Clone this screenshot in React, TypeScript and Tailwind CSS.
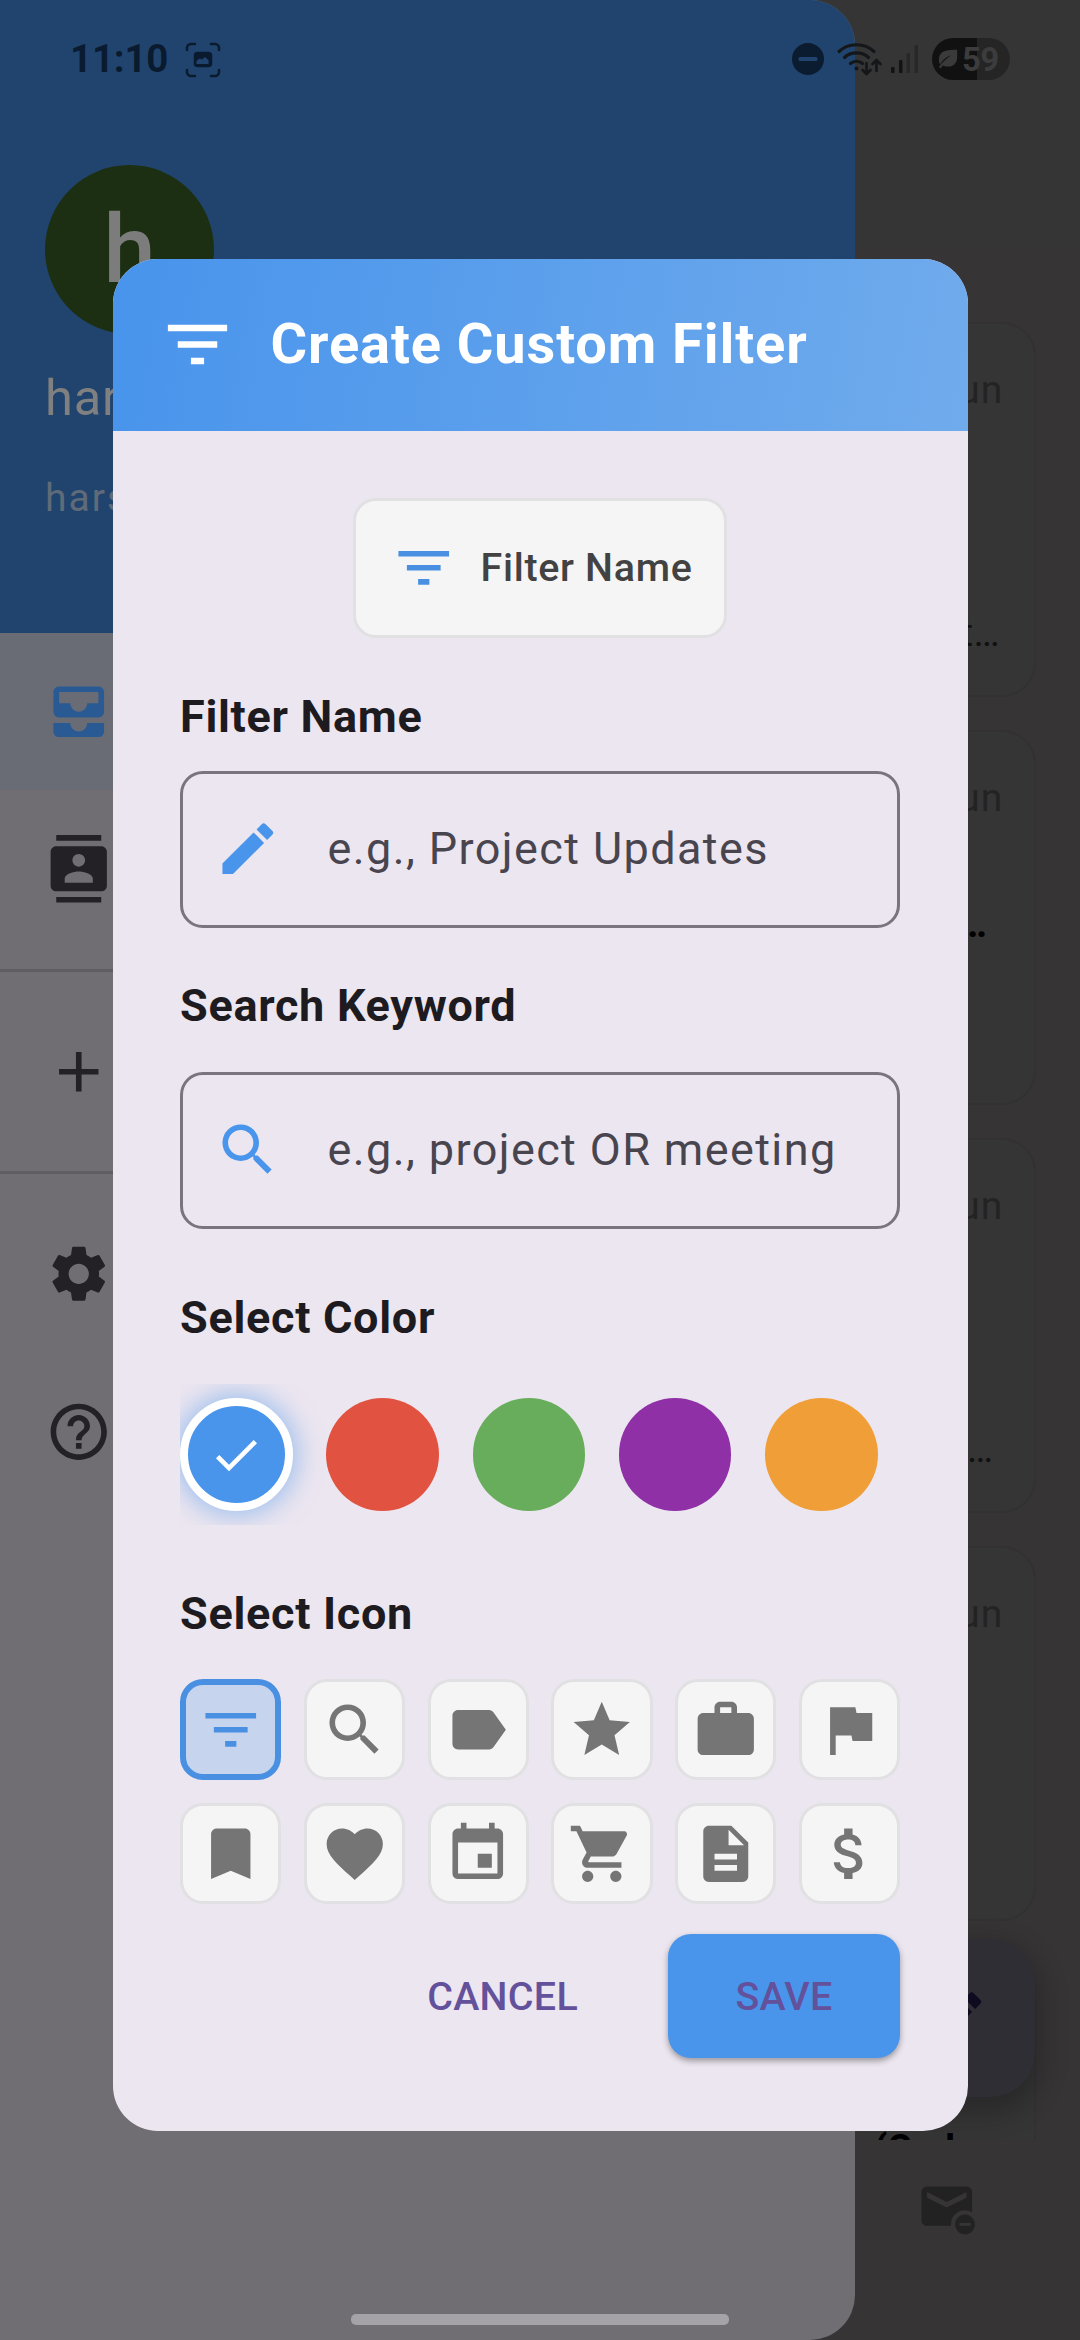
import React from "react";
import {
  MdAdd,
  MdAllInbox,
  MdAttachMoney,
  MdBookmark,
  MdCheck,
  MdContacts,
  MdDescription,
  MdEdit,
  MdEvent,
  MdFavorite,
  MdFilterList,
  MdFlag,
  MdHelpOutline,
  MdLabel,
  MdSearch,
  MdSettings,
  MdShoppingCart,
  MdStar,
  MdUnsubscribe,
  MdWork,
} from "react-icons/md";

const tiles = [
  MdFilterList,
  MdSearch,
  MdLabel,
  MdStar,
  MdWork,
  MdFlag,
  MdBookmark,
  MdFavorite,
  MdEvent,
  MdShoppingCart,
  MdDescription,
  MdAttachMoney,
];

const swatches = ["bg-[#e15241]", "bg-[#68ad5c]", "bg-[#8f30a6]", "bg-[#f09e38]"];

function StatusBar() {
  return (
    <div className="col-start-1 row-start-1 flex h-[118px] w-full items-center self-start pl-[70px] pr-[70px]">
      <span className="w-[99px] whitespace-nowrap text-[38.500px] font-bold leading-none tracking-[-0.2px] text-[#0a1b30]">11:10</span>
      <svg className="ml-[16px] mt-px h-[36px] w-[36px]" viewBox="0 0 36 36" fill="none" stroke="#0a1b30" strokeWidth="2.6" strokeLinecap="round">
        <path d="M2 8V6a4 4 0 0 1 4-4h4M26 2h4a4 4 0 0 1 4 4v2M34 28v2a4 4 0 0 1-4 4h-4M10 34H6a4 4 0 0 1-4-4v-2" />
        <rect x="9.500" y="10.500" width="17" height="14" rx="3" fill="#0a1b30" strokeWidth="1.500" />
        <path d="M11.500 19l3.200-2.500 2.400 1 2.800-2.500 3.600 3V22h-12z" fill="#21446e" stroke="none" />
      </svg>
      <div className="ml-auto flex items-center">
        <svg className="h-[32px] w-[32px]" viewBox="0 0 32 32">
          <circle cx="16" cy="16" r="16" fill="#0b1c30" />
          <rect x="6.500" y="14" width="19" height="4" rx="1.500" fill="#21446e" />
        </svg>
        <svg className="ml-[12px] h-[36px] w-[48px]" viewBox="0 0 48 36" fill="none" stroke="#141619" strokeWidth="3.200" strokeLinecap="round">
          <path d="M3 10.500C12.500 1.500 28.500 1.500 38 10.500M8.500 16.500c6.500-6.200 17.500-6.200 24 0M14.500 22.500c3.500-3 8.500-3 12 0" />
          <circle cx="20.500" cy="27.500" r="2" fill="#141619" stroke="none" />
          <path d="M30.500 22v10.500M26.500 29l4 4 4-4M40.500 30V19.500M36.500 23l4-4 4 4" strokeWidth="2.600" />
        </svg>
        <svg className="ml-[7px] h-[28px] w-[27px]" viewBox="0 0 27 28">
          <rect x="0" y="22" width="3.500" height="6" rx="1" fill="#131313" />
          <rect x="8" y="15" width="3.500" height="13" rx="1" fill="#131313" />
          <rect x="15.500" y="8" width="3.500" height="20" rx="1" fill="#282828" />
          <rect x="23.500" y="0" width="3.500" height="28" rx="1" fill="#282828" />
        </svg>
        <div className="ml-[14px] flex h-[42px] w-[78px] items-center rounded-full bg-[linear-gradient(90deg,#111_0_45px,#252525_45px)] pl-[5px]">
          <svg className="h-[22px] w-[22px]" viewBox="0 0 24 24">
            <path d="M22 2C11 2 2 3 2 13c0 2 .6 3.600 1.500 5C7 12 11 9.500 15.500 8 11 11 6 15 2 21l2 1 2.500-3c8 3.500 15.500-.5 15.500-9z" fill="#3a3a3a" />
          </svg>
          <span className="ml-[3px] text-[33px] font-bold leading-none tracking-[-0.8px] text-[#3c3c3c]">59</span>
        </div>
      </div>
    </div>
  );
}

function MailCard({ tail }: { tail?: React.ReactNode }) {
  return (
    <div className="h-[375px] shrink-0 overflow-hidden rounded-[34px] border-2 border-[#323133] bg-[#353535]">
      <div className="flex flex-col items-end pr-[31px] pt-[43px]">
        <span className="text-[39px] leading-[46px] tracking-[0.8px] text-[#232323]">Jun</span>
        {tail}
      </div>
    </div>
  );
}

function MailScreen() {
  return (
    <div className="col-start-1 row-start-1 flex h-[2340px] flex-col bg-[#373436] text-[#111]">
      <div className="h-[248px] shrink-0 bg-[#353535]" />
      <div className="flex h-[1892px] shrink-0 flex-col gap-[33px] overflow-hidden pl-[45px] pr-[44px] pt-[74px]">
        <MailCard tail={<span className="mr-[3px] mt-[197px] text-[39px] leading-[46px] tracking-[0.4px]">t…</span>} />
        <MailCard tail={<span className="mr-[16px] mt-[80px] text-[39px] font-bold leading-[46px] text-black">…</span>} />
        <MailCard tail={<span className="mr-[10px] mt-[197px] text-[39px] leading-[46px]">…</span>} />
        <MailCard />
        <div className="h-[375px] shrink-0 rounded-[34px] border-2 border-[#323133] bg-[#353535] pl-[827px] pt-[170px] text-[38px] font-bold leading-[46px] text-black">
          (Cod
        </div>
      </div>
      <div className="flex h-[200px] shrink-0 justify-end pr-[100px] pt-[38px]">
        <MdUnsubscribe className="size-[67.500px] text-[#222]" />
      </div>
    </div>
  );
}

function ComposeButton() {
  return (
    <div className="col-start-1 row-start-1 mb-[243px] mr-[45px] flex h-[158px] w-[158px] items-center justify-center self-end justify-self-end rounded-[45px] bg-[#2f2e35] text-[#0e0a20] shadow-[0_10px_24px_6px_rgba(20,20,20,0.35)]">
      <MdEdit className="size-[67.500px]" />
    </div>
  );
}

function Drawer() {
  return (
    <div className="col-start-1 row-start-1 flex h-[2340px] w-[855px] flex-col overflow-hidden rounded-r-[45px] bg-[#716e73] text-[#232126]">
      <div className="flex h-[633px] shrink-0 flex-col bg-[#21446e] pl-[45px] pt-[165px]">
        <div className="flex size-[169px] items-center justify-center rounded-full bg-[#1d2f13] text-[94px] font-medium leading-none text-[#7c7c7c]">h</div>
        <span className="mt-[34px] text-[50.600px] leading-[60px] tracking-[0.800px] text-[#808080]">harsh</span>
        <span className="mt-[47px] text-[39px] leading-[46px] tracking-[2px] text-[#5f6b78]">harsh@gmail.com</span>
      </div>
      <div className="flex h-[157px] shrink-0 items-center bg-[#696c74] pl-[45px] text-[#2a5a94]">
        <MdAllInbox className="size-[67.500px]" />
      </div>
      <div className="flex h-[182px] shrink-0 border-b-[3px] border-[#5f5c62] pl-[45px] pt-[45px]">
        <MdContacts className="size-[67.500px]" />
      </div>
      <div className="flex h-[202px] shrink-0 items-center border-b-[3px] border-[#5f5c62] pl-[45px]">
        <MdAdd className="size-[67.500px]" />
      </div>
      <div className="flex flex-col gap-[90px] pl-[45px] pt-[66px]">
        <MdSettings className="size-[67.500px]" />
        <MdHelpOutline className="size-[67.500px]" />
      </div>
    </div>
  );
}

function Field({ icon, hint }: { icon: React.ReactNode; hint: string }) {
  return (
    <div className="flex h-[157px] items-center rounded-[23px] border-[3px] border-[#79747e] pb-[2px] pl-[31px] text-[#4a95ec]">
      {icon}
      <span className="ml-[46px] whitespace-nowrap text-[45px] leading-[60px] tracking-[1.400px] text-[#49454f]">{hint}</span>
    </div>
  );
}

function Label({ className, children }: { className: string; children: string }) {
  return <h3 className={`text-[45px] font-bold leading-[60px] tracking-[0.7px] ${className}`}>{children}</h3>;
}

function FilterDialog() {
  return (
    <div className="z-10 col-start-1 row-start-1 mt-[259px] flex h-[1872px] w-[855px] flex-col self-start justify-self-center overflow-hidden rounded-[45px] bg-[#ece6f0] text-[#1d1b20]">
      <div className="flex h-[172px] shrink-0 items-center bg-[linear-gradient(100deg,#4894ec,#70abec)] pb-[2px] pl-[45px] text-white">
        <MdFilterList className="size-[79px]" />
        <h2 className="ml-[34px] text-[56px] font-bold leading-[66px] tracking-[0.9px]">Create Custom Filter</h2>
      </div>
      <div className="flex flex-col px-[67.500px] pt-[67px]">
        <div className="flex h-[140px] w-[374px] items-center self-center rounded-[23px] border-[3px] border-[#e1e0e2] bg-[#f5f5f5] pl-[34px]">
          <MdFilterList className="size-[67.500px] text-[#4a90e2]" />
          <span className="ml-[23px] whitespace-nowrap text-[39.400px] font-medium leading-[46px] tracking-[0.7px] text-[#424242]">Filter Name</span>
        </div>
        <Label className="mt-[49px]">Filter Name</Label>
        <div className="mt-[24px]">
          <Field icon={<MdEdit className="size-[67.500px]" />} hint="e.g., Project Updates" />
        </div>
        <Label className="mt-[48px]">Search Keyword</Label>
        <div className="mt-[36px]">
          <Field icon={<MdSearch className="size-[67.500px]" />} hint="e.g., project OR meeting" />
        </div>
        <Label className="mt-[59px]">Select Color</Label>
        <div className="mt-[36px] flex h-[141px] items-center gap-[33.750px] overflow-hidden">
          <div className="flex size-[112.500px] items-center justify-center rounded-full border-[8.400px] border-white bg-[#4a95ec] text-white shadow-[0_0_26px_4px_rgba(74,149,236,0.5)]">
            <MdCheck className="size-[56px]" />
          </div>
          {swatches.map((color) => (
            <div key={color} className={`size-[112.500px] rounded-full ${color}`} />
          ))}
        </div>
        <Label className="mt-[59px]">Select Icon</Label>
        <div className="mt-[35px] grid grid-cols-6 gap-[22.500px]">
          {tiles.map((Icon, i) => (
            <div
              key={i}
              className={
                i === 0
                  ? "flex h-[101.250px] items-center justify-center rounded-[23px] border-[6px] border-[#4a90e2] bg-[#c6d5ed] text-[#4a90e2]"
                  : "flex h-[101.250px] items-center justify-center rounded-[23px] border-[3px] border-[#e1e0e2] bg-[#f5f5f5] text-[#757575]"
              }
            >
              <Icon className="size-[67.500px] shrink-0" />
            </div>
          ))}
        </div>
        <div className="mt-[30px] flex h-[123.500px] items-center justify-end text-[39.400px] font-medium tracking-[0.3px] text-[#64519b]">
          <button className="mr-[90px] pt-[2px]">CANCEL</button>
          <button className="h-full w-[232px] rounded-[23px] bg-[#4a95ec] pt-[2px] shadow-[0_3px_6px_rgba(0,0,0,0.35)]">SAVE</button>
        </div>
      </div>
    </div>
  );
}

export default function App() {
  return (
    <div className="grid h-[2340px] w-[1080px] grid-cols-1 grid-rows-1 overflow-hidden font-['Roboto',sans-serif]">
      <MailScreen />
      <ComposeButton />
      <Drawer />
      <StatusBar />
      <FilterDialog />
      <div className="col-start-1 row-start-1 mb-[15px] h-[11px] w-[378px] self-end justify-self-center rounded-[5px] bg-[#a5a3a8]" />
    </div>
  );
}
